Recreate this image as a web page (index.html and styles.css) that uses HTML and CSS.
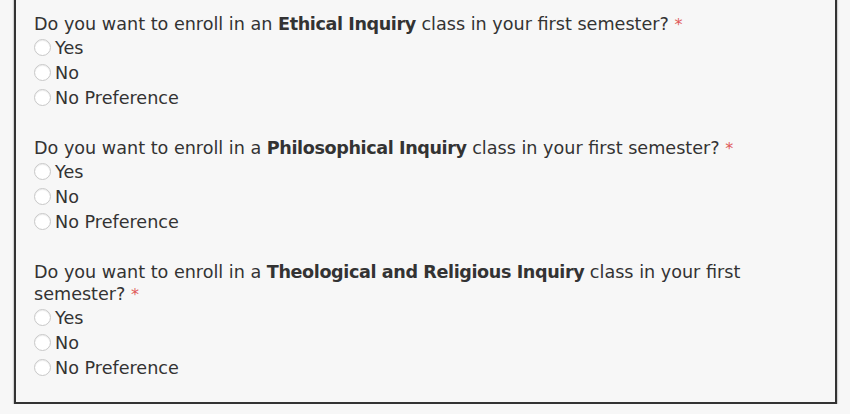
FILE: index.html
```html
<!DOCTYPE html>
<html>
<head>
<meta charset="utf-8">
<link rel="stylesheet" href="styles.css">
</head>
<body>
<div class="panel">
  <div class="group">
    <div class="question">Do you want to enroll in an <b>Ethical Inquiry</b> class in your first semester? <span class="req">*</span></div>
    <label class="opt"><input type="radio" name="q1"><span>Yes</span></label>
    <label class="opt"><input type="radio" name="q1"><span>No</span></label>
    <label class="opt"><input type="radio" name="q1"><span>No Preference</span></label>
  </div>
  <div class="group">
    <div class="question">Do you want to enroll in a <b>Philosophical Inquiry</b> class in your first semester? <span class="req">*</span></div>
    <label class="opt"><input type="radio" name="q2"><span>Yes</span></label>
    <label class="opt"><input type="radio" name="q2"><span>No</span></label>
    <label class="opt"><input type="radio" name="q2"><span>No Preference</span></label>
  </div>
  <div class="group">
    <div class="question">Do you want to enroll in a <b>Theological and Religious Inquiry</b> class in your first semester? <span class="req">*</span></div>
    <label class="opt"><input type="radio" name="q3"><span>Yes</span></label>
    <label class="opt"><input type="radio" name="q3"><span>No</span></label>
    <label class="opt"><input type="radio" name="q3"><span>No Preference</span></label>
  </div>
</div>
</body>
</html>
```
FILE: styles.css
```css
html, body {
  margin: 0;
  padding: 0;
  background: #f7f7f7;
}
body {
  font-family: "DejaVu Sans", "Open Sans", sans-serif;
  color: #333;
  padding: 0 13px 0 14px;
}
.panel {
  margin-top: -20px;
  border: 2px solid #333;
  box-shadow: 0 0 1px 1px rgba(0,0,0,0.15);
  background: #f7f7f7;
  padding: 31px 40px 22px 18px;
  display: flex;
  flex-direction: column;
  gap: 27px;
}
.group {
  display: flex;
  flex-direction: column;
}
.question {
  font-size: 17.6px;
  line-height: 22px;
  margin-bottom: -1px;
}
.question b {
  font-weight: 700;
  letter-spacing: -0.4px;
}
.req {
  color: #e05a5a;
  font-size: 16px;
}
.opt {
  display: flex;
  align-items: center;
  height: 25px;
  font-size: 17.6px;
}
.opt input {
  appearance: none;
  -webkit-appearance: none;
  width: 17px;
  height: 17px;
  margin: 0 4px 0 0;
  border: 1px solid #c8c8c8;
  border-radius: 50%;
  background: #fff;
  box-shadow: inset 0 1px 1px rgba(0,0,0,0.08);
}
```
